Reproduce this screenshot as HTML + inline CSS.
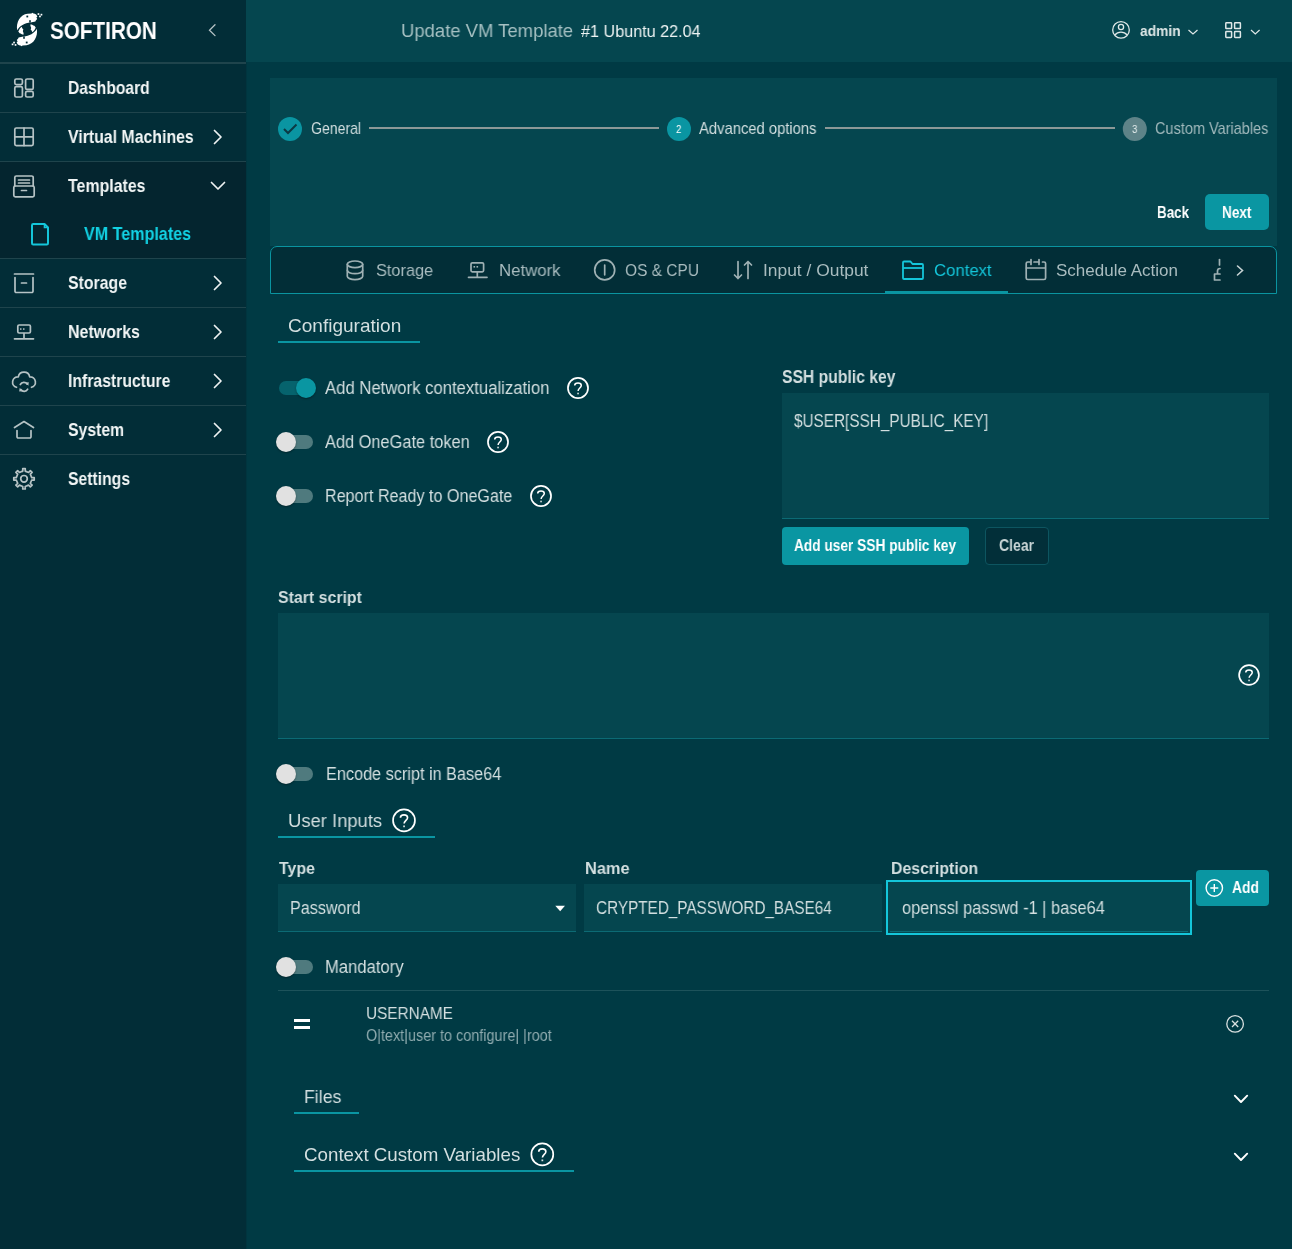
<!DOCTYPE html>
<html><head><meta charset="utf-8">
<style>
*{box-sizing:border-box;margin:0;padding:0}
html,body{width:1292px;height:1249px;overflow:hidden;background:#003a44;font-family:"Liberation Sans",sans-serif}
.a{position:absolute}
.t{position:absolute;white-space:nowrap;line-height:1;transform-origin:0 0;will-change:transform}
svg.i{position:absolute;left:0;top:0;width:1292px;height:1249px;overflow:visible}
</style></head><body>

<div class="a" style="left:0;top:0;width:246px;height:1249px;background:#022d37"></div>
<div class="a" style="left:246px;top:62px;width:1px;height:1187px;background:#00353f"></div>
<div class="a" style="left:0;top:162px;width:246px;height:96px;background:#04252f"></div>
<div class="a" style="left:0;top:62px;width:246px;height:2px;background:#1f444c"></div>
<div class="a" style="left:0;top:112px;width:246px;height:1px;background:#1f444c"></div>
<div class="a" style="left:0;top:161px;width:246px;height:1px;background:#1f444c"></div>
<div class="a" style="left:0;top:258px;width:246px;height:1px;background:#1f444c"></div>
<div class="a" style="left:0;top:307px;width:246px;height:1px;background:#1f444c"></div>
<div class="a" style="left:0;top:356px;width:246px;height:1px;background:#1f444c"></div>
<div class="a" style="left:0;top:405px;width:246px;height:1px;background:#1f444c"></div>
<div class="a" style="left:0;top:454px;width:246px;height:1px;background:#1f444c"></div>
<div class="a" style="left:246px;top:0;width:1046px;height:62px;background:#05464f"></div>
<div class="a" style="left:270px;top:78px;width:1007px;height:168px;background:#05464f"></div>
<div class="a" style="left:270px;top:246px;width:1007px;height:48px;background:#022e37;border:1px solid #0a94a0;border-bottom-width:1px;border-radius:7px 7px 0 0"></div>
<div class="a" style="left:885px;top:291px;width:123px;height:3px;background:#0a95a2"></div>
<div class="t" style="left:49.60px;top:19.71px;font-size:23.25px;transform:scaleX(0.8892);color:#ffffff;font-weight:bold;">SOFTIRON</div>
<div class="t" style="left:68.00px;top:79.97px;font-size:17.75px;transform:scaleX(0.8817);color:#f2f6f6;font-weight:bold;">Dashboard</div>
<div class="t" style="left:68.00px;top:128.97px;font-size:17.75px;transform:scaleX(0.8936);color:#f2f6f6;font-weight:bold;">Virtual Machines</div>
<div class="t" style="left:68.00px;top:177.97px;font-size:17.75px;transform:scaleX(0.8966);color:#f2f6f6;font-weight:bold;">Templates</div>
<div class="t" style="left:68.00px;top:274.97px;font-size:17.75px;transform:scaleX(0.8939);color:#f2f6f6;font-weight:bold;">Storage</div>
<div class="t" style="left:68.00px;top:323.97px;font-size:17.75px;transform:scaleX(0.9000);color:#f2f6f6;font-weight:bold;">Networks</div>
<div class="t" style="left:68.00px;top:372.97px;font-size:17.75px;transform:scaleX(0.8879);color:#f2f6f6;font-weight:bold;">Infrastructure</div>
<div class="t" style="left:68.00px;top:421.97px;font-size:17.75px;transform:scaleX(0.8889);color:#f2f6f6;font-weight:bold;">System</div>
<div class="t" style="left:68.00px;top:470.97px;font-size:17.75px;transform:scaleX(0.8857);color:#f2f6f6;font-weight:bold;">Settings</div>
<div class="t" style="left:84.00px;top:226.08px;font-size:17.625px;transform:scaleX(0.9145);color:#12d2e4;font-weight:bold;">VM Templates</div>
<div class="t" style="left:401.00px;top:21.11px;font-size:19.0px;transform:scaleX(0.9718);color:#a6c0c2;">Update VM Template</div>
<div class="t" style="left:581.00px;top:23.30px;font-size:17.125px;transform:scaleX(0.9449);color:#eef3f3;">#1 Ubuntu 22.04</div>
<div class="t" style="left:1139.70px;top:23.09px;font-size:15.25px;transform:scaleX(0.9067);color:#dfe8e8;font-weight:bold;">admin</div>
<div class="t" style="left:310.50px;top:121.46px;font-size:15.75px;transform:scaleX(0.8946);color:#d3dfe0;">General</div>
<div class="t" style="left:699.40px;top:121.46px;font-size:15.75px;transform:scaleX(0.9384);color:#d3dfe0;">Advanced options</div>
<div class="t" style="left:1155.30px;top:121.46px;font-size:15.75px;transform:scaleX(0.9203);color:#a3babd;">Custom Variables</div>
<div class="a" style="left:369px;top:127px;width:290px;height:2px;background:#8c9897"></div>
<div class="a" style="left:825px;top:127px;width:290px;height:2px;background:#8c9897"></div>
<div class="t" style="left:1156.80px;top:203.65px;font-size:16.125px;transform:scaleX(0.8333);color:#ffffff;font-weight:bold;">Back</div>
<div class="a" style="left:1205px;top:194px;width:64px;height:36px;background:#0a96a2;border-radius:5px"></div>
<div class="t" style="left:1221.80px;top:203.65px;font-size:16.125px;transform:scaleX(0.8417);color:#ffffff;font-weight:bold;">Next</div>
<div class="t" style="left:375.50px;top:262.41px;font-size:17.0px;transform:scaleX(0.9600);color:#a9bcbf;">Storage</div>
<div class="t" style="left:498.50px;top:262.41px;font-size:17.0px;transform:scaleX(0.9873);color:#a9bcbf;">Network</div>
<div class="t" style="left:625.00px;top:262.41px;font-size:17.0px;transform:scaleX(0.9111);color:#a9bcbf;">OS &amp; CPU</div>
<div class="t" style="left:763.30px;top:262.41px;font-size:17.0px;transform:scaleX(1.0233);color:#a9bcbf;">Input / Output</div>
<div class="t" style="left:933.50px;top:262.41px;font-size:17.0px;transform:scaleX(0.9847);color:#14c6da;">Context</div>
<div class="t" style="left:1056.20px;top:262.41px;font-size:17.0px;transform:scaleX(0.9975);color:#a9bcbf;">Schedule Action</div>
<div class="t" style="left:288.00px;top:317.24px;font-size:18.375px;transform:scaleX(1.0367);color:#d3dfe0;">Configuration</div>
<div class="a" style="left:278px;top:341px;width:142px;height:2px;background:#0a95a2"></div>
<div class="a" style="left:279px;top:381px;width:36px;height:14px;border-radius:7px;background:#06636d"></div>
<div class="a" style="left:296px;top:378px;width:20px;height:20px;border-radius:10px;background:#0a96a2;box-shadow:0 1px 2px rgba(0,0,0,.35)"></div>
<div class="a" style="left:279px;top:435px;width:34px;height:14px;border-radius:7px;background:#4f7a7e"></div>
<div class="a" style="left:276px;top:432px;width:20px;height:20px;border-radius:10px;background:#e1e1e1;box-shadow:0 1px 2px rgba(0,0,0,.35)"></div>
<div class="a" style="left:279px;top:489px;width:34px;height:14px;border-radius:7px;background:#4f7a7e"></div>
<div class="a" style="left:276px;top:486px;width:20px;height:20px;border-radius:10px;background:#e1e1e1;box-shadow:0 1px 2px rgba(0,0,0,.35)"></div>
<div class="a" style="left:279px;top:767px;width:34px;height:14px;border-radius:7px;background:#4f7a7e"></div>
<div class="a" style="left:276px;top:764px;width:20px;height:20px;border-radius:10px;background:#e1e1e1;box-shadow:0 1px 2px rgba(0,0,0,.35)"></div>
<div class="a" style="left:279px;top:960px;width:34px;height:14px;border-radius:7px;background:#4f7a7e"></div>
<div class="a" style="left:276px;top:957px;width:20px;height:20px;border-radius:10px;background:#e1e1e1;box-shadow:0 1px 2px rgba(0,0,0,.35)"></div>
<div class="t" style="left:325.00px;top:380.18px;font-size:17.5px;transform:scaleX(0.9532);color:#d3dfe0;">Add Network contextualization</div>
<div class="t" style="left:325.00px;top:434.18px;font-size:17.5px;transform:scaleX(0.9355);color:#d3dfe0;">Add OneGate token</div>
<div class="t" style="left:325.00px;top:488.18px;font-size:17.5px;transform:scaleX(0.9216);color:#d3dfe0;">Report Ready to OneGate</div>
<div class="t" style="left:781.50px;top:369.18px;font-size:17.5px;transform:scaleX(0.8969);color:#d3dfe0;font-weight:bold;">SSH public key</div>
<div class="a" style="left:782px;top:393px;width:487px;height:126px;background:#05464f;border-bottom:1px solid #0c6a74"></div>
<div class="t" style="left:794.00px;top:412.98px;font-size:17.5px;transform:scaleX(0.8752);color:#d3dfe0;">$USER[SSH_PUBLIC_KEY]</div>
<div class="a" style="left:782px;top:527px;width:187px;height:38px;background:#0a96a2;border-radius:4px"></div>
<div class="t" style="left:794.20px;top:538.45px;font-size:16.0px;transform:scaleX(0.8558);color:#ffffff;font-weight:bold;">Add user SSH public key</div>
<div class="a" style="left:985px;top:527px;width:64px;height:38px;background:#022f39;border:1px solid #0d5560;border-radius:4px"></div>
<div class="t" style="left:999.40px;top:538.45px;font-size:16.0px;transform:scaleX(0.8750);color:#c9d5d6;font-weight:bold;">Clear</div>
<div class="t" style="left:278.40px;top:589.62px;font-size:16.75px;transform:scaleX(0.9494);color:#d3dfe0;font-weight:bold;">Start script</div>
<div class="a" style="left:278px;top:613px;width:991px;height:126px;background:#05464f;border-bottom:1px solid #0c6a74"></div>
<div class="t" style="left:325.70px;top:766.18px;font-size:17.5px;transform:scaleX(0.9286);color:#d3dfe0;">Encode script in Base64</div>
<div class="t" style="left:287.80px;top:812.03px;font-size:18.625px;transform:scaleX(0.9895);color:#d3dfe0;">User Inputs</div>
<div class="a" style="left:278px;top:836px;width:157px;height:2px;background:#0a95a2"></div>
<div class="t" style="left:278.90px;top:860.71px;font-size:16.875px;transform:scaleX(0.9421);color:#d3dfe0;font-weight:bold;">Type</div>
<div class="t" style="left:584.60px;top:860.71px;font-size:16.875px;transform:scaleX(0.9717);color:#d3dfe0;font-weight:bold;">Name</div>
<div class="t" style="left:890.60px;top:860.71px;font-size:16.875px;transform:scaleX(0.9387);color:#d3dfe0;font-weight:bold;">Description</div>
<div class="a" style="left:278px;top:884px;width:298px;height:48px;background:#05464f;border-bottom:1px solid #0c6a74"></div>
<div class="t" style="left:290.40px;top:900.18px;font-size:17.5px;transform:scaleX(0.9195);color:#d3dfe0;">Password</div>
<div class="a" style="left:584px;top:884px;width:298px;height:48px;background:#05464f;border-bottom:1px solid #0c6a74"></div>
<div class="t" style="left:596.30px;top:900.18px;font-size:17.5px;transform:scaleX(0.8741);color:#d3dfe0;">CRYPTED_PASSWORD_BASE64</div>
<div class="a" style="left:886px;top:880px;width:306px;height:55px;background:#05464f;border:2px solid #14c6da"></div>
<div class="a" style="left:890px;top:931px;width:298px;height:1px;background:#0c6a74"></div>
<div class="t" style="left:901.70px;top:900.18px;font-size:17.5px;transform:scaleX(0.9359);color:#d3dfe0;">openssl passwd -1 | base64</div>
<div class="a" style="left:1196px;top:870px;width:73px;height:35.5px;background:#0a96a2;border-radius:4px"></div>
<div class="t" style="left:1231.80px;top:880.16px;font-size:15.875px;transform:scaleX(0.8710);color:#ffffff;font-weight:bold;">Add</div>
<div class="t" style="left:325.30px;top:959.18px;font-size:17.5px;transform:scaleX(0.9506);color:#d3dfe0;">Mandatory</div>
<div class="a" style="left:278px;top:990px;width:991px;height:1px;background:#1d525a"></div>
<div class="t" style="left:366.40px;top:1005.40px;font-size:17.125px;transform:scaleX(0.8969);color:#d3dfe0;">USERNAME</div>
<div class="t" style="left:366.40px;top:1028.16px;font-size:15.875px;transform:scaleX(0.9093);color:#8fabaf;">O|text|user to configure| |root</div>
<div class="a" style="left:294px;top:1019px;width:16px;height:3px;background:#fff"></div>
<div class="a" style="left:294px;top:1026px;width:16px;height:3px;background:#fff"></div>
<div class="t" style="left:303.60px;top:1088.13px;font-size:18.625px;transform:scaleX(0.9513);color:#d3dfe0;">Files</div>
<div class="a" style="left:294px;top:1112px;width:65px;height:2px;background:#0a95a2"></div>
<div class="t" style="left:303.60px;top:1146.04px;font-size:18.375px;transform:scaleX(1.0208);color:#d3dfe0;">Context Custom Variables</div>
<div class="a" style="left:294px;top:1170px;width:280px;height:2px;background:#0a95a2"></div>
<svg class="i" viewBox="0 0 1292 1249"><circle cx="578" cy="388" r="10.05" fill="none" stroke="#fff" stroke-width="1.7"/><path d="M574.7 385.5 C574.7 382.1 581.3 382.1 581.3 385.5 C581.3 387.7 578.1 388.3 578.1 390.9" fill="none" stroke="#fff" stroke-width="1.5"/><rect x="577.25" y="392.7" width="1.6" height="1.6" fill="#d8e0e0"/><circle cx="498" cy="442" r="10.05" fill="none" stroke="#fff" stroke-width="1.7"/><path d="M494.7 439.5 C494.7 436.1 501.3 436.1 501.3 439.5 C501.3 441.7 498.1 442.3 498.1 444.9" fill="none" stroke="#fff" stroke-width="1.5"/><rect x="497.25" y="446.7" width="1.6" height="1.6" fill="#d8e0e0"/><circle cx="541" cy="496" r="10.05" fill="none" stroke="#fff" stroke-width="1.7"/><path d="M537.7 493.5 C537.7 490.1 544.3 490.1 544.3 493.5 C544.3 495.7 541.1 496.3 541.1 498.9" fill="none" stroke="#fff" stroke-width="1.5"/><rect x="540.25" y="500.7" width="1.6" height="1.6" fill="#d8e0e0"/><circle cx="1249" cy="675" r="9.9" fill="none" stroke="#fff" stroke-width="1.7"/><path d="M1245.7454128440368 672.5344036697247 C1245.7454128440368 669.1811926605504 1252.2545871559632 669.1811926605504 1252.2545871559632 672.5344036697247 C1252.2545871559632 674.704128440367 1249.098623853211 675.295871559633 1249.098623853211 677.8600917431193" fill="none" stroke="#fff" stroke-width="1.4793577981651376"/><rect x="1248.2603211009175" y="679.6353211009174" width="1.5779816513761469" height="1.5779816513761469" fill="#d8e0e0"/><circle cx="404" cy="820.4" r="10.950000000000001" fill="none" stroke="#fff" stroke-width="1.7"/><path d="M400.4275229357798 817.6935779816514 C400.4275229357798 814.0128440366972 407.5724770642202 814.0128440366972 407.5724770642202 817.6935779816514 C407.5724770642202 820.0752293577981 404.10825688073396 820.7247706422019 404.10825688073396 823.5394495412844" fill="none" stroke="#fff" stroke-width="1.6238532110091741"/><rect x="403.1880733944954" y="825.4880733944954" width="1.7321100917431194" height="1.7321100917431194" fill="#d8e0e0"/><circle cx="542.3" cy="1154.4" r="10.950000000000001" fill="none" stroke="#fff" stroke-width="1.7"/><path d="M538.7275229357798 1151.6935779816515 C538.7275229357798 1148.0128440366973 545.8724770642201 1148.0128440366973 545.8724770642201 1151.6935779816515 C545.8724770642201 1154.0752293577982 542.4082568807339 1154.724770642202 542.4082568807339 1157.5394495412845" fill="none" stroke="#fff" stroke-width="1.6238532110091741"/><rect x="541.4880733944954" y="1159.4880733944956" width="1.7321100917431194" height="1.7321100917431194" fill="#d8e0e0"/><g fill="none" stroke="#b6c3c5" stroke-width="1.7" stroke-linecap="round" stroke-linejoin="round"><rect x="14.8" y="79" width="7.6" height="5.6" rx="1.5"/><rect x="14.8" y="86.6" width="7.6" height="10.4" rx="1.5"/><rect x="25.6" y="79" width="7.6" height="10.4" rx="1.5"/><rect x="25.6" y="91.4" width="7.6" height="5.6" rx="1.5"/></g><g fill="none" stroke="#b6c3c5" stroke-width="1.7" stroke-linecap="round" stroke-linejoin="round"><rect x="14.8" y="128" width="18.4" height="17.6" rx="1.5"/><path d="M24 128V145.6M14.8 136.8H33.2"/></g><g fill="none" stroke="#b6c3c5" stroke-width="1.7" stroke-linecap="round" stroke-linejoin="round"><path d="M14.8 186V177.5a1.5 1.5 0 0 1 1.5-1.5H31.7a1.5 1.5 0 0 1 1.5 1.5V186"/><rect x="13.8" y="186" width="20.4" height="10.8" rx="1.5"/><path d="M18.5 180H29.5M18.5 183H29.5M21.5 190.5H26.5"/></g><path d="M32 225.2a1.2 1.2 0 0 1 1.2-1.2H44.5L48 227.5V243.2a1.2 1.2 0 0 1-1.2 1.2H33.2a1.2 1.2 0 0 1-1.2-1.2Z" fill="none" stroke="#14c6da" stroke-width="2" stroke-linejoin="round"/><path d="M44.5 224.5V227.5H47.5" fill="none" stroke="#14c6da" stroke-width="1.6"/><g fill="none" stroke="#b6c3c5" stroke-width="1.7" stroke-linecap="round" stroke-linejoin="round"><path d="M14.5 274H33.5"/><path d="M15 277.5V291.3a1.2 1.2 0 0 0 1.2 1.2H31.8a1.2 1.2 0 0 0 1.2-1.2V277.5"/><path d="M21.5 283H26.5"/></g><g fill="none" stroke="#b6c3c5" stroke-width="1.7" stroke-linecap="round" stroke-linejoin="round"><rect x="17.8" y="325" width="12.6" height="8" rx="1.3"/><path d="M24 333.5V338.8M14.5 338.8H33.5"/></g><rect x="20" y="328.3" width="1.5" height="1.5" fill="#b6c3c5"/><rect x="23" y="328.3" width="1.5" height="1.5" fill="#b6c3c5"/><g fill="none" stroke="#b6c3c5" stroke-width="1.7" stroke-linecap="round" stroke-linejoin="round" stroke-width="1.5"><path d="M16.5 387.3A5.3 5.3 0 0 1 18.3 376.9A5.8 5.8 0 0 1 29.7 376.9A5.3 5.3 0 0 1 31.5 387.3"/><path d="M20.3 384.5A4 4 0 0 1 27.2 384.2"/><path d="M27.7 389.2A4 4 0 0 1 20.8 389.5"/></g><path d="M25.5 382.5L28.8 382.3L28.4 385.8Z" fill="#b6c3c5"/><path d="M22.5 391.2L19.2 391.4L19.6 387.9Z" fill="#b6c3c5"/><g fill="none" stroke="#b6c3c5" stroke-width="1.7" stroke-linecap="round" stroke-linejoin="round"><path d="M14.5 427.5L24 421.5L33.5 427.5"/><path d="M17 430.5V436.8a1.2 1.2 0 0 0 1.2 1.2H29.8a1.2 1.2 0 0 0 1.2-1.2V430.5"/></g><path d="M21.59 471.59 L22.78 471.10 L22.74 468.58 L25.26 468.58 L25.22 471.10 L26.41 471.59 L27.39 472.00 L28.58 472.49 L30.34 470.68 L32.12 472.46 L30.31 474.22 L30.80 475.41 L31.21 476.39 L31.70 477.58 L34.22 477.54 L34.22 480.06 L31.70 480.02 L31.21 481.21 L30.80 482.19 L30.31 483.38 L32.12 485.14 L30.34 486.92 L28.58 485.11 L27.39 485.60 L26.41 486.01 L25.22 486.50 L25.26 489.02 L22.74 489.02 L22.78 486.50 L21.59 486.01 L20.61 485.60 L19.42 485.11 L17.66 486.92 L15.88 485.14 L17.69 483.38 L17.20 482.19 L16.79 481.21 L16.30 480.02 L13.78 480.06 L13.78 477.54 L16.30 477.58 L16.79 476.39 L17.20 475.41 L17.69 474.22 L15.88 472.46 L17.66 470.68 L19.42 472.49 L20.61 472.00Z" fill="none" stroke="#b6c3c5" stroke-width="1.7" stroke-linecap="round" stroke-linejoin="round" stroke-width="1.6"/><circle cx="24" cy="478.8" r="3.3" fill="none" stroke="#b6c3c5" stroke-width="1.7" stroke-linecap="round" stroke-linejoin="round" stroke-width="1.7"/><path d="M215 24.8L209.5 30.2L215 35.6" fill="none" stroke="#b6c3c5" stroke-width="1.3" stroke-linecap="round"/><path d="M214.5 130.5L221 137L214.5 143.5" fill="none" stroke="#eef2f2" stroke-width="1.7" stroke-linecap="round" stroke-linejoin="round"/><path d="M214.5 276.5L221 283L214.5 289.5" fill="none" stroke="#eef2f2" stroke-width="1.7" stroke-linecap="round" stroke-linejoin="round"/><path d="M214.5 325.5L221 332L214.5 338.5" fill="none" stroke="#eef2f2" stroke-width="1.7" stroke-linecap="round" stroke-linejoin="round"/><path d="M214.5 374.5L221 381L214.5 387.5" fill="none" stroke="#eef2f2" stroke-width="1.7" stroke-linecap="round" stroke-linejoin="round"/><path d="M214.5 423.5L221 430L214.5 436.5" fill="none" stroke="#eef2f2" stroke-width="1.7" stroke-linecap="round" stroke-linejoin="round"/><path d="M211.5 182.5L218 189L224.5 182.5" fill="none" stroke="#eef2f2" stroke-width="1.7" stroke-linecap="round" stroke-linejoin="round"/><g fill="#fff"><path d="M17.2 30.2C15.8 22.5 20.2 14.6 27.6 13.8L31.5 13.6L32.2 12.8L33.6 13.4L34.8 13.8L36.2 14.6L37.4 16.4L36.4 17.6L37.2 19L35.8 20.6L35.4 21.6L30.6 22.4C24.6 23 19.6 25.6 17.2 30.2Z"/><rect x="37.6" y="13.2" width="1.7" height="1.7"/><rect x="40.6" y="13.8" width="1.7" height="1.7"/><rect x="39.1" y="15.6" width="1.7" height="1.7"/><path d="M18.3 31.6C19.2 29.2 20.6 27.6 21.6 26.8L22.6 28.8L23.4 29.6L22.8 31L23.6 33.2L23.4 34.8L21.8 34.2L20.6 33.4L19.6 33.2Z"/></g><g fill="#fff" transform="rotate(180 27 29.5)"><path d="M17.2 30.2C15.8 22.5 20.2 14.6 27.6 13.8L31.5 13.6L32.2 12.8L33.6 13.4L34.8 13.8L36.2 14.6L37.4 16.4L36.4 17.6L37.2 19L35.8 20.6L35.4 21.6L30.6 22.4C24.6 23 19.6 25.6 17.2 30.2Z"/><rect x="37.6" y="13.2" width="1.7" height="1.7"/><rect x="40.6" y="13.8" width="1.7" height="1.7"/><rect x="39.1" y="15.6" width="1.7" height="1.7"/><path d="M18.3 31.6C19.2 29.2 20.6 27.6 21.6 26.8L22.6 28.8L23.4 29.6L22.8 31L23.6 33.2L23.4 34.8L21.8 34.2L20.6 33.4L19.6 33.2Z"/></g><rect x="26.4" y="15.6" width="1.8" height="1.8" fill="#032c36"/><rect x="29.2" y="20.2" width="1.6" height="2.4" fill="#032c36"/><g transform="rotate(180 27 29.5)"><rect x="26.4" y="15.6" width="1.8" height="1.8" fill="#032c36"/><rect x="29.2" y="20.2" width="1.6" height="2.4" fill="#032c36"/></g><g fill="none" stroke="#dfe8e8" stroke-width="1.3"><circle cx="1121" cy="29.9" r="8.3"/><circle cx="1121" cy="27" r="2.6"/><path d="M1114.8 35.2C1116.5 33 1118.5 32.2 1121 32.2C1123.5 32.2 1125.5 33 1127.2 35.2"/></g><path d="M1188.5 30L1193 34L1197.5 30" fill="none" stroke="#dfe8e8" stroke-width="1.2"/><g fill="none" stroke="#dfe8e8" stroke-width="1.5"><rect x="1225.8" y="22.8" width="5.8" height="5.8" rx="0.6"/><rect x="1234.6" y="22.8" width="5.8" height="5.8" rx="0.6"/><rect x="1225.8" y="31.6" width="5.8" height="5.8" rx="0.6"/><rect x="1234.6" y="31.6" width="5.8" height="5.8" rx="0.6"/></g><path d="M1251 30L1255.3 34L1259.6 30" fill="none" stroke="#dfe8e8" stroke-width="1.2"/><circle cx="290" cy="129" r="12" fill="#0a95a2"/><path d="M284 129L288 133L296.5 124.5" fill="none" stroke="#0b3a44" stroke-width="2"/><circle cx="679" cy="129" r="12" fill="#0a95a2"/><circle cx="1134.8" cy="129" r="12" fill="#5e8388"/><g fill="none" stroke="#9fb1b4" stroke-width="1.7" stroke-linecap="round" stroke-linejoin="round"><ellipse cx="355" cy="264.3" rx="7.7" ry="3.3"/><path d="M347.3 264.3V276.2C347.3 278.1 350.7 279.6 355 279.6C359.3 279.6 362.7 278.1 362.7 276.2V264.3"/><path d="M347.3 270.3C347.3 272.2 350.7 273.7 355 273.7C359.3 273.7 362.7 272.2 362.7 270.3"/></g><g fill="none" stroke="#9fb1b4" stroke-width="1.7" stroke-linecap="round" stroke-linejoin="round"><rect x="471" y="262.8" width="12.6" height="9" rx="1.3"/><path d="M477.3 272V277.3M468.5 277.3H487"/></g><rect x="473.5" y="266" width="1.6" height="1.6" fill="#9fb1b4"/><rect x="476.5" y="266" width="1.6" height="1.6" fill="#9fb1b4"/><g fill="none" stroke="#9fb1b4" stroke-width="1.7" stroke-linecap="round" stroke-linejoin="round"><circle cx="604.7" cy="269.9" r="10"/><path d="M604.7 265V274.8"/></g><g fill="none" stroke="#9fb1b4" stroke-width="1.7" stroke-linecap="round" stroke-linejoin="round" stroke-width="1.9"><path d="M738 261.5V278.5M734.5 275L738 278.5L741.5 275"/><path d="M748 278.5V261.5M744.5 265L748 261.5L751.5 265"/></g><g fill="none" stroke="#14c6da" stroke-width="1.8" stroke-linejoin="round"><path d="M903 278V262.5a1 1 0 0 1 1-1H910.5L912.5 264H922a1 1 0 0 1 1 1V278a1 1 0 0 1-1 1H904a1 1 0 0 1-1-1Z"/><path d="M903 268H923"/></g><g fill="none" stroke="#9fb1b4" stroke-width="1.7" stroke-linecap="round" stroke-linejoin="round"><path d="M1030 262H1027.8a1.6 1.6 0 0 0-1.6 1.6V277.9a1.6 1.6 0 0 0 1.6 1.6H1044a1.6 1.6 0 0 0 1.6-1.6V263.6a1.6 1.6 0 0 0-1.6-1.6H1042.5"/><path d="M1034 262H1038.5"/><path d="M1026.5 268H1045.3"/><path d="M1031 259.5V264.5M1039 259.5V264.5"/></g><g fill="none" stroke="#9fb1b4" stroke-width="1.7" stroke-linecap="round" stroke-linejoin="round"><path d="M1219.5 259.5V265"/><path d="M1220 268.5A2.5 2.5 0 0 0 1217.5 271V274M1220 274H1214.5V280H1220"/></g><path d="M1237.5 266L1242.5 270.5L1237.5 275" fill="none" stroke="#c8d3d4" stroke-width="1.6" stroke-linecap="round"/><path d="M555.3 905.7H565L560.15 911.3Z" fill="#fff"/><g fill="none" stroke="#fff" stroke-width="1.4"><circle cx="1214.3" cy="888" r="8.2"/><path d="M1214.3 884V892M1210.3 888H1218.3"/></g><g fill="none" stroke="#d8e0e0" stroke-width="1.3"><circle cx="1235.1" cy="1023.9" r="8.3"/><path d="M1232 1020.8L1238.2 1027M1238.2 1020.8L1232 1027"/></g><path d="M1234.8 1095.7L1241 1102L1247.2 1095.7" fill="none" stroke="#fff" stroke-width="1.9" stroke-linecap="round" stroke-linejoin="round"/><path d="M1234.8 1153.7L1241 1160L1247.2 1153.7" fill="none" stroke="#fff" stroke-width="1.9" stroke-linecap="round" stroke-linejoin="round"/></svg>
<div class="t" style="left:676.00px;top:124.26px;font-size:11.5px;transform:scaleX(0.8571);color:#ffffff;">2</div>
<div class="t" style="left:1131.80px;top:124.26px;font-size:11.5px;transform:scaleX(0.8571);color:#e6eeee;">3</div>
</body></html>
